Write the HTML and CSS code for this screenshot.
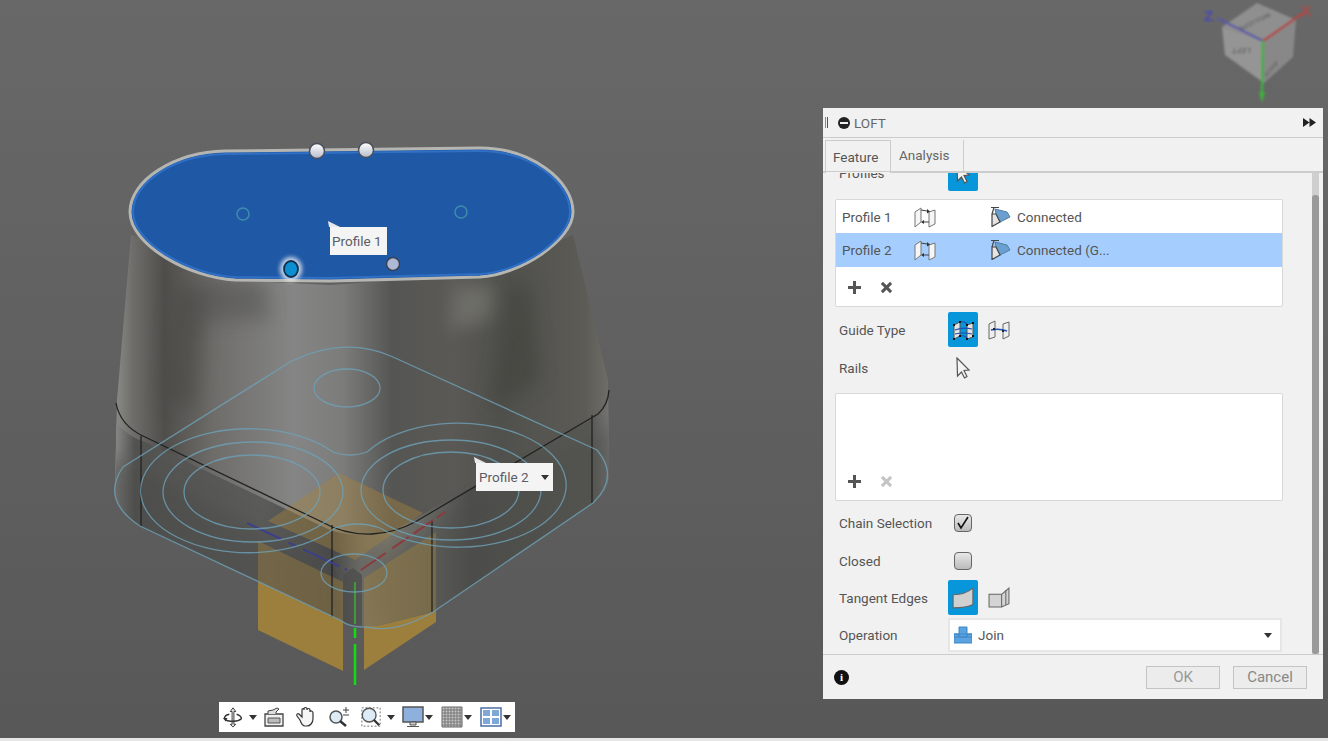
FILE: index.html
```html
<!DOCTYPE html>
<html lang="en">
<head>
  <meta charset="UTF-8">
  <title>Loft</title>
  <link rel="stylesheet" href="styles.css">
</head>
<body>
  <svg class="defs" width="0" height="0">
    <defs>
      <symbol id="i-flip" viewBox="0 0 22 22">
        <path d="M1 6l6-4v14l-6 5z" fill="#f6f6f6" stroke="#777"/>
        <path d="M15 6l6-2v14l-6 3z" fill="#f6f6f6" stroke="#777"/>
        <path d="M7 4l6 1M15 16H9" fill="none" stroke="#444" stroke-width="1.200"/>
        <path d="M13 3l3 2.500-3 2zM10 14l-3 2 3 2z" fill="#333"/>
      </symbol>
      <symbol id="i-conn" viewBox="0 0 20 20">
        <path d="M4 2l12 3 3 5-10 5-4-8z" fill="#6a9fcf" stroke="#4d7ea8"/>
        <path d="M0 .5h8M3 .5L1 7M1 7h4l4 8-8 4.500z" fill="#e4e4e4" stroke="#444" stroke-width="1.200"/>
      </symbol>
      <symbol id="i-cursor" viewBox="0 0 16 22">
        <path d="M2 1l12 12-5 .5 3 6-2.500 1.500-3-6-4 4z" fill="#f4f4f4" stroke="#555" stroke-width="1.200"/>
      </symbol>
    </defs>
  </svg>

  <main class="viewport">
    <svg class="scene" viewBox="0 0 1328 738" width="1328" height="738">
      <defs>
        <linearGradient id="wall" x1="115" x2="610" y1="0" y2="0" gradientUnits="userSpaceOnUse">
          <stop offset="0" stop-color="#8b8b88"/>
          <stop offset=".035" stop-color="#6f6e6b"/>
          <stop offset=".1" stop-color="#4f4e4b"/>
          <stop offset=".2" stop-color="#6e6d6a"/>
          <stop offset=".36" stop-color="#858585"/>
          <stop offset=".46" stop-color="#7c7c7b"/>
          <stop offset=".56" stop-color="#555553"/>
          <stop offset=".68" stop-color="#5a5955"/>
          <stop offset=".78" stop-color="#50504c"/>
          <stop offset=".95" stop-color="#5c5b56"/>
          <stop offset="1" stop-color="#6f6e69"/>
        </linearGradient>
        <linearGradient id="lower" x1="115" x2="610" y1="0" y2="0" gradientUnits="userSpaceOnUse">
          <stop offset="0" stop-color="#8a8a88"/>
          <stop offset=".04" stop-color="#525250"/>
          <stop offset=".3" stop-color="#5b5b5a"/>
          <stop offset=".44" stop-color="#4a4a4a"/>
          <stop offset=".5" stop-color="#6d6d68"/>
          <stop offset=".55" stop-color="#79766a"/>
          <stop offset=".62" stop-color="#6a6a66"/>
          <stop offset=".72" stop-color="#4d4d4b"/>
          <stop offset=".96" stop-color="#585853"/>
          <stop offset="1" stop-color="#777"/>
        </linearGradient>
        <linearGradient id="knob" x1="0" x2="0" y1="0" y2="1">
          <stop offset="0" stop-color="#fff"/>
          <stop offset="1" stop-color="#b6bccb"/>
        </linearGradient>
        <filter id="soft"><feGaussianBlur stdDeviation="1"/></filter>
        <filter id="soft2" x="-50%" y="-50%" width="200%" height="200%"><feGaussianBlur stdDeviation="2"/></filter>
        <filter id="soft6" x="-100%" y="-100%" width="300%" height="300%"><feGaussianBlur stdDeviation="9"/></filter>
        <clipPath id="bodyclip">
          <path d="M131 235L117 400L115 490Q116 510 140 526L340 620Q360 630 385 624L433 612L593 503Q610 492 609 470L608 380L573 235L480 150L200 150Z"/>
        </clipPath>
      </defs>

      <!-- orange boxes -->
      <path d="M258 541L343 582V671L258 630Z" fill="#9c7e3d"/>
      <path d="M364 578L436 532V622L364 670Z" fill="#9c7e3d"/>

      <!-- solid -->
      <path d="M131 235L117 400L115 490Q116 510 140 526L340 620Q360 630 385 624L433 612L593 503Q610 492 609 470L608 380L573 235L480 275L330 285L230 280Z" fill="url(#wall)"/>
      <g clip-path="url(#bodyclip)">
        <path d="M100 400Q120 435 145 442L330 530Q360 540 395 530L600 415L620 380V640H100Z" fill="url(#lower)"/>
        <path d="M100 450L340 570L345 640H100Z" fill="#4b4b4a" opacity=".5" filter="url(#soft6)"/>
        <path d="M620 420L370 560L380 640H620Z" fill="#4b4b4a" opacity=".4" filter="url(#soft6)"/>
        <path d="M175 285L165 400L195 410L205 290Z" fill="#484743" opacity=".5" filter="url(#soft6)"/>
        <path d="M510 285L490 410L540 380L530 285Z" fill="#42423d" opacity=".6" filter="url(#soft6)"/>
        <path d="M455 285L450 330L490 320L495 285Z" fill="#868680" opacity=".5" filter="url(#soft6)"/>
        <path d="M200 282L195 320L270 320L265 282Z" fill="#4a4a48" opacity=".4" filter="url(#soft6)"/>
        <path d="M258 541L343 582V671L258 630Z" fill="#a5843c" opacity=".4"/>
        <path d="M364 578L436 532V622L364 670Z" fill="#a5843c" opacity=".4"/>
        <path d="M339 473L423 513L355 560L268 521Z" fill="#a5843c" opacity=".42"/>
        <path d="M343 575L353 568L362 575V640H343Z" fill="#4c4c4c" opacity=".75"/>
      </g>

      <!-- edges -->
      <g fill="none" stroke="#222" stroke-width="1.300">
        <path d="M116 403Q120 425 143 436L322 522Q345 535 372 534Q395 533 415 522L598 414Q608 405 609 390"/>
        <path d="M141 436V526M332 525V617M432 520V612M592 415V503"/>
      </g>

      <!-- axes through the part -->
      <g fill="none" stroke-width="2">
        <path d="M247 523L347 570" stroke="#3c3f8c" stroke-dasharray="38 8 8 8 40 6"/>
        <path d="M361 570L445 512" stroke="#8c3a3e" stroke-dasharray="30 8 20 6 24 4"/>
        <path d="M355 582V624" stroke="#3f9a3c"/>
        <path d="M355 628V638M355 644V685" stroke="#10dd10" stroke-width="2.500"/>
      </g>

      <!-- sketch on the base -->
      <g fill="none" stroke="#6ea2b8" stroke-width="1.300" opacity=".8">
        <path d="M290 362Q345 335 393 357L597 450Q620 477 593 503L433 612Q395 634 367 627Q350 628 340 620L140 526Q100 500 123 467Z"/>
        <ellipse cx="347" cy="388" rx="33" ry="19"/>
        <ellipse cx="354" cy="573" rx="33" ry="19"/>
        <ellipse cx="252" cy="492" rx="68" ry="37"/>
        <ellipse cx="253" cy="492" rx="90" ry="50"/>
        <ellipse cx="451" cy="490" rx="68" ry="38"/>
        <ellipse cx="451" cy="490" rx="90" ry="50"/>
        <path d="M333 452A108 62 0 1 0 335 528Q357 520 380 528A108 62 0 1 0 367 452Q350 458 333 452Z"/>
      </g>

      <!-- top profile -->
      <path d="M130 212C130 180 175 152 225 151L480 148C530 148 573 180 573 212C573 240 520 275 480 277L330 281L235 280C190 278 130 245 130 212Z" fill="#1f58a5" stroke="#b5b5b2" stroke-width="3"/>
      <path d="M133 212C133 182 175 155 225 154L480 151C530 151 570 182 570 212C570 240 520 272 480 274L330 278L235 277C190 275 133 243 133 212Z" fill="none" stroke="#2f6fc4" stroke-width="2"/>
      <circle cx="243" cy="214" r="6" fill="none" stroke="#3f8cae" stroke-width="1.500"/>
      <circle cx="461" cy="212" r="6" fill="none" stroke="#3f8cae" stroke-width="1.500"/>

      <!-- handles -->
      <circle cx="317" cy="151" r="7.500" fill="url(#knob)" stroke="#4a4f5c" stroke-width="1.500"/>
      <circle cx="366" cy="150" r="7.500" fill="url(#knob)" stroke="#4a4f5c" stroke-width="1.500"/>
      <circle cx="393" cy="264" r="6.500" fill="#adb9d6" stroke="#3b4252" stroke-width="1.500"/>
      <ellipse cx="291" cy="269" rx="11" ry="12" fill="#fff" opacity=".75" filter="url(#soft2)"/>
      <ellipse cx="291" cy="269" rx="7" ry="8" fill="#0b8fd0" stroke="#10304e" stroke-width="1.800"/>

      <!-- view cube -->
      <g filter="url(#soft)">
        <path d="M1257 3L1296 20L1263 41L1222 27Z" fill="#8f8f8f"/>
        <path d="M1222 27L1263 41L1264 83L1225 55Z" fill="#959595"/>
        <path d="M1263 41L1296 20L1293 57L1264 83Z" fill="#888"/>
        <path d="M1217 18L1263 41" stroke="#5a5aa8" stroke-width="2.500" fill="none"/>
        <path d="M1263 41L1303 13" stroke="#b04848" stroke-width="2.500" fill="none"/>
        <path d="M1263 41L1262 95" stroke="#3fae3f" stroke-width="2.500" fill="none"/>
        <path d="M1259 92h6l-3 11z" fill="#3fae3f"/>
        <text class="cube-label" x="1204" y="21" fill="#4a4ab0">Z</text>
        <text class="cube-label" x="1301" y="16" fill="#b04848">X</text>
        <text class="cube-face" transform="matrix(-.95 0 .1 -.95 1251 48)">LEFT</text>
        <text class="cube-face" transform="matrix(.55 -.6 .1 .9 1277 60) rotate(180)">BACK</text>
        <text class="cube-face" transform="matrix(.85 -.42 .85 .42 1243 30)">BOTTOM</text>
      </g>
    </svg>

    <div class="tip tip-one">Profile 1</div>
    <div class="tip tip-two">Profile 2 <span class="caret"></span></div>

    <div class="navbar">
      <div class="nav-group">
        <svg class="nav-icon" viewBox="0 0 24 22"><path d="M12 1l-3 4h2v14h-2l3 3 3-3h-2V5h2z" fill="#e8e8e8" stroke="#333"/><path d="M8 8C2 9 1 14 6 15s12 1 15-2c1-2-2-4-5-5" fill="none" stroke="#333" stroke-width="1.600"/><path d="M1 12l3 4 2-4z" fill="#333"/></svg>
        <span class="caret"></span>
      </div>
      <div class="nav-group">
        <svg class="nav-icon" viewBox="0 0 22 22"><path d="M2 8h18v12H2z" fill="#f0f0f0" stroke="#444" stroke-width="1.300"/><path d="M5 12h12v5H5z" fill="#bbb" stroke="#555"/><path d="M5 8V5l5-1 4-2 2 1-3 3v2" fill="#ddd" stroke="#444"/></svg>
      </div>
      <div class="nav-group">
        <svg class="nav-icon" viewBox="0 0 22 22"><path d="M5 14L2 10c-1-2 1-3 2-2l3 3V4c0-2 2-2 2 0V3c0-2 3-2 3 0v1c0-2 3-2 3 0v2c0-2 3-1 3 1v6c0 4-3 7-6 7h-2c-3 0-4-3-5-6z" fill="#f6f6f6" stroke="#333" stroke-width="1.200"/></svg>
      </div>
      <div class="nav-group">
        <svg class="nav-icon" viewBox="0 0 22 22"><circle cx="8" cy="11" r="6" fill="#dcebf5" stroke="#555" stroke-width="1.500"/><path d="M12 15l6 5" stroke="#333" stroke-width="2.500"/><path d="M15 4h6M18 1v6M15 9h6" stroke="#444"/></svg>
      </div>
      <div class="nav-group">
        <svg class="nav-icon" viewBox="0 0 24 24"><path d="M2 2h20v20H2z" fill="none" stroke="#666" stroke-dasharray="2 2"/><circle cx="10" cy="10" r="7.500" fill="#dcebf5" stroke="#555" stroke-width="1.500"/><path d="M15 15l6 6" stroke="#333" stroke-width="2.500"/></svg>
        <span class="caret"></span>
      </div>
      <div class="nav-group tight">
        <svg class="nav-icon" viewBox="0 0 22 22"><path d="M1 1h20v15H1z" fill="#8db0dc" stroke="#555" stroke-width="1.500"/><path d="M8 16h6v3H8zM5 20.500h12" fill="#ccc" stroke="#555"/></svg>
        <span class="caret"></span>
      </div>
      <div class="nav-group tight">
        <svg class="nav-icon" viewBox="0 0 22 22"><path d="M1 1h20v20H1z" fill="#c8c8c8" stroke="#666"/><path d="M4 1v20M7 1v20M10 1v20M13 1v20M16 1v20M19 1v20M1 4h20M1 7h20M1 10h20M1 13h20M1 16h20M1 19h20" stroke="#777"/></svg>
        <span class="caret"></span>
      </div>
      <div class="nav-group tight">
        <svg class="nav-icon" viewBox="0 0 22 20"><path d="M1 1h20v18H1z" fill="#fff" stroke="#4a6fa5" stroke-width="1.500"/><path d="M3 3h7v6H3zM12 3h7v6h-7zM3 11h7v6H3zM12 11h7v6h-7z" fill="#7fa8da"/></svg>
        <span class="caret"></span>
      </div>
    </div>

    <section class="panel">
      <header class="panel-title">
        <span class="grip"></span>
        <span class="minus"></span>
        <span class="panel-name">LOFT</span>
        <svg class="expand" viewBox="0 0 13 9" width="13" height="9"><path d="M0 0l6.500 4.500L0 9zM6.500 0L13 4.500 6.500 9z" fill="#222"/></svg>
      </header>
      <nav class="tabs">
        <div class="tab active">Feature</div>
        <div class="tab">Analysis</div>
      </nav>
      <div class="panel-body">
        <div class="scroll">
          <div class="row row-first">
            <div class="label">Profiles</div>
            <div class="btn on"><svg class="ico-cursor"><use href="#i-cursor"/></svg></div>
          </div>
          <div class="listbox">
            <div class="list-row">
              <span class="cell-name">Profile 1</span>
              <svg class="ico"><use href="#i-flip"/></svg>
              <svg class="ico-conn"><use href="#i-conn"/></svg>
              <span>Connected</span>
            </div>
            <div class="list-row selected">
              <span class="cell-name">Profile 2</span>
              <svg class="ico"><use href="#i-flip"/></svg>
              <svg class="ico-conn"><use href="#i-conn"/></svg>
              <span>Connected (G...</span>
            </div>
            <div class="list-tools">
              <span class="plus"></span>
              <span class="cross"></span>
            </div>
          </div>
          <div class="row row-guide">
            <div class="label">Guide Type</div>
            <div class="btn on">
              <svg class="ico" viewBox="0 0 22 22"><path d="M2 6l6-3v14l-6 3zM15 6l6-2v14l-6 2z" fill="#e4e4e4" stroke="#555"/><path d="M8 3q4-1 7 2M8 17q4-1 7 2M3 11q8-3 17-1M3 15q8-2 17 0" fill="none" stroke="#1f4fb0" stroke-width="1.200"/><path d="M1 5h2v2H1zM7 2h2v2H7zM14 5h2v2h-2zM20 3h2v2h-2zM1 19h2v2H1zM7 16h2v2H7zM14 19h2v2h-2zM20 16h2v2h-2z" fill="#111"/></svg>
            </div>
            <svg class="ico ico-side" viewBox="0 0 22 22"><path d="M1 5l6-3v16l-6 2zM15 5l6-2v14l-6 3z" fill="#eee" stroke="#666"/><path d="M3 11q8-2 16 1" fill="none" stroke="#1f4fb0" stroke-width="1.500"/><path d="M5 9h2v2H5zM14 11h2v2h-2z" fill="#222"/></svg>
          </div>
          <div class="row">
            <div class="label">Rails</div>
            <svg class="ico-cursor plain"><use href="#i-cursor"/></svg>
          </div>
          <div class="listbox listbox-rails">
            <div class="list-tools">
              <span class="plus"></span>
              <span class="cross off"></span>
            </div>
          </div>
          <div class="row">
            <div class="label">Chain Selection</div>
            <div class="check">
              <svg viewBox="0 0 16 16" width="16" height="16"><path d="M3 8l3 5 7-11" fill="none" stroke="#111" stroke-width="1.600"/></svg>
            </div>
          </div>
          <div class="row row-closed">
            <div class="label">Closed</div>
            <div class="check"></div>
          </div>
          <div class="row row-tangent">
            <div class="label">Tangent Edges</div>
            <div class="btn on">
              <svg class="ico" viewBox="1 1 20 20"><path d="M2 8q11 0 18-6v15q-6 3-18 3z" fill="#d0d0d0" stroke="#666"/></svg>
            </div>
            <svg class="ico ico-side" viewBox="0 1 21 21"><path d="M1 8h12v12H1zM13 8l7-6v15l-7 3z" fill="#d4d4d4" stroke="#666"/><path d="M17 4v14" stroke="#666" fill="none"/></svg>
          </div>
          <div class="row row-op">
            <div class="label">Operation</div>
            <div class="select">
              <svg class="ico-join" viewBox="0 0 18 18"><path d="M5 1h8v7h5v9H0V8h5z" fill="#5aa3e0" stroke="#3f87c4"/><path d="M0 8h18M5 8v3h8V8M0 11h18" fill="none" stroke="#3f87c4"/></svg>
              <span class="select-text">Join</span>
              <span class="caret"></span>
            </div>
          </div>
        </div>
        <div class="scrollbar"><div class="thumb"></div></div>
      </div>
      <footer class="panel-foot">
        <span class="info">i</span>
        <button class="foot-btn btn-ok">OK</button>
        <button class="foot-btn">Cancel</button>
      </footer>
    </section>
  </main>
  <div class="strip"></div>
</body>
</html>
```
FILE: styles.css
```css
html, body {
  margin: 0;
  padding: 0;
  height: 100%;
  overflow: hidden;
}

body {
  font-family: Roboto, Arial, sans-serif;
  font-size: 13.5px;
  color: #555;
  display: flex;
  flex-direction: column;
}

.defs {
  position: absolute;
}

.viewport {
  position: relative;
  flex: 1;
  background: linear-gradient(#686868, #585858);
  overflow: hidden;
}

.scene {
  display: block;
}

.strip {
  height: 3px;
  background: #e6e6e6;
}

.cube-label {
  font: bold 15px "Liberation Sans", sans-serif;
}

.cube-face {
  font: bold 8px "Liberation Sans", sans-serif;
  fill: #666;
}

/* labels over the model */
.tip {
  position: absolute;
  height: 28px;
  line-height: 28px;
  background: #f4f4f4;
  color: #5c5c66;
  padding-left: 3px;
  box-sizing: border-box;
}

.tip::before {
  content: "";
  position: absolute;
  left: -3px;
  top: -6px;
  border-left: 3px solid transparent;
  border-right: 8px solid transparent;
  border-bottom: 6px solid #e8e8e8;
  transform: skewX(35deg);
}

.tip-one {
  left: 330px;
  top: 227px;
  width: 57px;
  padding-left: 2px;
}

.tip-two {
  left: 476px;
  top: 463px;
  width: 77px;
}

.tip-two .caret {
  margin-left: 9px;
  vertical-align: 2px;
}

.caret {
  display: inline-block;
  flex: none;
  width: 0;
  height: 0;
  border-left: 4px solid transparent;
  border-right: 4px solid transparent;
  border-top: 5px solid #333;
}

/* bottom navigation bar */
.navbar {
  position: absolute;
  left: 219px;
  top: 702px;
  width: 296px;
  height: 30px;
  box-sizing: border-box;
  padding-left: 3px;
  background: #fff;
  display: grid;
  grid-template-columns: 41px 32px 33px 32px 42px 39px 39px auto;
  align-items: center;
}

.nav-group {
  display: flex;
  align-items: center;
  gap: 5px;
}

.nav-group.tight {
  gap: 1px;
}

.nav-icon {
  width: 22px;
  height: 22px;
}

/* loft dialog */
.panel {
  position: absolute;
  left: 823px;
  top: 108px;
  width: 500px;
  height: 591px;
  background: #f1f1f1;
  display: flex;
  flex-direction: column;
}

.panel-title {
  height: 29px;
  flex: none;
  display: flex;
  align-items: center;
  border-bottom: 1px solid #ccc;
  color: #666;
}

.grip {
  width: 3px;
  height: 11px;
  margin-left: 2px;
  border-left: 1px solid #888;
  border-right: 1px solid #555;
  box-sizing: border-box;
}

.minus {
  width: 12px;
  height: 12px;
  margin-left: 10px;
  border-radius: 50%;
  background: #222;
  position: relative;
}

.minus::after {
  content: "";
  position: absolute;
  left: 2px;
  right: 2px;
  top: 5px;
  height: 2px;
  background: #f1f1f1;
}

.panel-name {
  margin-left: 4px;
}

.expand {
  margin-left: auto;
  margin-right: 7px;
}

.tabs {
  height: 35px;
  flex: none;
  box-sizing: border-box;
  display: flex;
  padding: 2px 0 0 2px;
  border-bottom: 2px solid #ccc;
}

.tab {
  width: 73px;
  box-sizing: border-box;
  padding-left: 8px;
  line-height: 31px;
  border-right: 1px solid #ccc;
  color: #666;
}

.tab.active {
  width: 66px;
  border: 1px solid #ccc;
  border-bottom: 2px solid #f1f1f1;
  height: 34px;
  padding-left: 7px;
  line-height: 33px;
  color: #555;
}

.panel-body {
  flex: 1;
  position: relative;
  overflow: hidden;
}

.scroll {
  margin-top: -17px;
  padding: 0 40px 0 12px;
}

.row {
  display: flex;
  align-items: center;
  height: 35px;
  padding-left: 4px;
}

.label {
  width: 109px;
  flex: none;
}

.btn {
  width: 30px;
  height: 35px;
  box-sizing: border-box;
  display: flex;
  align-items: center;
  justify-content: center;
  border-radius: 2px;
}

.btn.on {
  background: #0796d9;
}

.ico {
  width: 22px;
  height: 22px;
}

.ico-side {
  margin-left: 10px;
}

.ico-cursor {
  width: 16px;
  height: 22px;
}

.ico-cursor.plain {
  margin-left: 7px;
}

.row-first {
  height: 34px;
  margin-bottom: 9px;
}

.listbox {
  height: 108px;
  margin-bottom: 5px;
  box-sizing: border-box;
  border: 1px solid #d8d8d8;
  border-radius: 2px;
  background: #fff;
  display: flex;
  flex-direction: column;
}

.list-row {
  height: 33px;
  flex: none;
  display: flex;
  align-items: center;
  padding-left: 6px;
}

.list-row.selected {
  height: 34px;
  background: #a5ceff;
}

.cell-name {
  width: 72px;
}

.ico-conn {
  width: 20px;
  height: 20px;
  margin: 0 6px 0 55px;
}

.list-tools {
  margin-top: auto;
  height: 37px;
  display: flex;
  align-items: center;
  padding-left: 12px;
  gap: 19px;
}

.plus, .cross {
  position: relative;
  width: 13px;
  height: 13px;
}

.plus::before, .plus::after, .cross::before, .cross::after {
  content: "";
  position: absolute;
  background: #555;
}

.plus::before, .cross::before {
  left: 0;
  right: 0;
  top: 5px;
  height: 3px;
}

.plus::after, .cross::after {
  top: 0;
  bottom: 0;
  left: 5px;
  width: 3px;
}

.cross {
  transform: rotate(45deg);
}

.cross.off::before, .cross.off::after {
  background: #c4c4c4;
}

.row-guide {
  margin-bottom: 3px;
}

.listbox-rails {
  margin-top: 8px;
  margin-bottom: 4px;
}

.check {
  width: 18px;
  height: 18px;
  box-sizing: border-box;
  margin-left: 6px;
  border: 1px solid #666;
  border-radius: 4px;
  background: linear-gradient(#e8e8e8, #bbb);
  display: flex;
  align-items: center;
  justify-content: center;
}

.row-closed {
  margin-top: 3px;
}

.row-tangent {
  margin-top: 2px;
  margin-bottom: 3px;
}

.row-op {
  height: 34px;
}

.select {
  width: 334px;
  height: 34px;
  box-sizing: border-box;
  border: 2px solid #e6e6e6;
  background: #fff;
  display: flex;
  align-items: center;
  padding: 0 8px 0 4px;
}

.ico-join {
  width: 18px;
  height: 18px;
  margin-right: 6px;
}

.select .caret {
  margin-left: auto;
}

.scrollbar {
  position: absolute;
  right: 4px;
  top: 0;
  bottom: 0;
  width: 7px;
  background: #cfcfcf;
}

.thumb {
  position: absolute;
  top: 22px;
  bottom: 0;
  left: 0;
  right: 0;
  background: #9a9a9a;
  border-radius: 3px;
}

.panel-foot {
  height: 45px;
  flex: none;
  box-sizing: border-box;
  border-top: 1px solid #ccc;
  display: flex;
  align-items: center;
  padding: 0 16px 0 11px;
  gap: 13px;
}

.info {
  width: 15px;
  height: 15px;
  border-radius: 50%;
  background: #111;
  color: #fff;
  font: bold 11px/15px "Liberation Serif", serif;
  text-align: center;
  margin-right: auto;
}

.foot-btn {
  width: 74px;
  height: 23px;
  padding: 0;
  font: 15px Roboto, Arial, sans-serif;
  color: #888;
  background: #ececec;
  border: 1px solid #c4c4c4;
}

.btn-ok {
  color: #999;
}
```
